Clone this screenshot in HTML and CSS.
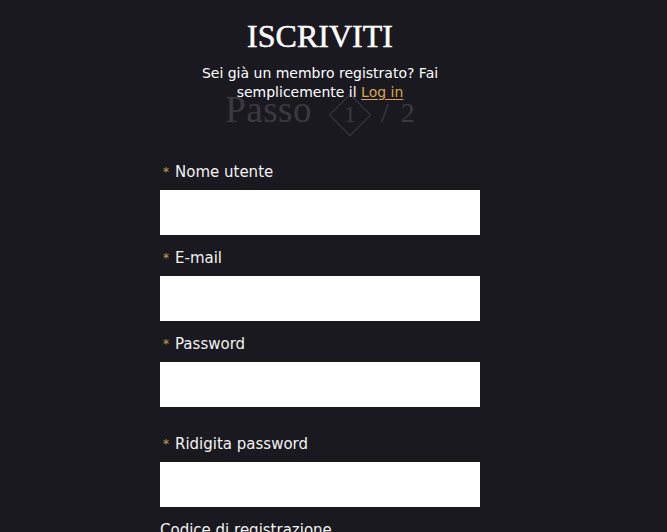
FILE: index.html
```html
<!DOCTYPE html>
<html lang="it">
<head>
<meta charset="utf-8">
<title>Iscriviti</title>
<link rel="stylesheet" href="styles.css">
</head>
<body>
<div class="page">
  <header class="head">
    <h1 class="title">ISCRIVITI</h1>
    <p class="subtitle">Sei già un membro registrato? Fai semplicemente il <a class="login" href="#">Log in</a></p>
    <div class="steps">
      <span class="steps-word">Passo</span>
      <span class="steps-current"><span class="steps-num">1</span></span>
      <span class="steps-total">/ 2</span>
    </div>
  </header>
  <form class="form">
    <div class="group">
      <label class="label"><span class="req">*</span>Nome utente</label>
      <input class="field" type="text">
    </div>
    <div class="group">
      <label class="label"><span class="req">*</span>E-mail</label>
      <input class="field" type="email">
    </div>
    <div class="group">
      <label class="label"><span class="req">*</span>Password</label>
      <input class="field" type="password">
      <div class="hint"></div>
    </div>
    <div class="group">
      <label class="label"><span class="req">*</span>Ridigita password</label>
      <input class="field" type="password">
    </div>
    <div class="group">
      <label class="label">Codice di registrazione</label>
      <input class="field" type="text">
    </div>
  </form>
</div>
</body>
</html>
```
FILE: styles.css
```css
html, body {
  margin: 0;
  padding: 0;
  background: #1a191f;
}
body {
  font-family: "DejaVu Sans", "Liberation Sans", sans-serif;
  color: #f2f2f2;
}
.page {
  width: 640px;
}
.head {
  display: flex;
  flex-direction: column;
  align-items: center;
}
.title {
  margin: 16px 0 0;
  font-family: "Liberation Serif", "DejaVu Serif", serif;
  font-weight: normal;
  font-size: 32px;
  line-height: 40px;
  color: #ffffff;
  -webkit-text-stroke: 0.5px #ffffff;
}
.subtitle {
  position: relative;
  z-index: 1;
  margin: 8px 0 0;
  width: 250px;
  font-size: 14px;
  line-height: 19px;
  text-align: center;
  color: #ffffff;
}
.login {
  color: #d7a751;
  text-decoration: underline;
  text-underline-offset: 2px;
}
.steps {
  display: flex;
  align-items: baseline;
  margin-top: -13px;
  font-family: "Liberation Serif", "DejaVu Serif", serif;
  color: #3b3a40;
}
.steps-word {
  font-size: 37px;
  line-height: 42px;
  letter-spacing: 0.5px;
}
.steps-current {
  position: relative;
  display: flex;
  align-items: center;
  justify-content: center;
  width: 42px;
  height: 42px;
  margin-left: 17px;
  font-size: 23px;
  line-height: 22px;
}
.steps-current::before {
  content: "";
  position: absolute;
  left: 6px;
  top: 6px;
  width: 28px;
  height: 28px;
  border: 1px solid #3b3a40;
  transform: rotate(45deg);
}
.steps-num {
  position: relative;
}
.steps-total {
  margin-left: 10px;
  font-size: 28px;
  line-height: 42px;
  word-spacing: 5px;
}
.form {
  width: 320px;
  margin: 26px auto 0;
}
.group {
  margin-bottom: 13px;
}
.label {
  display: block;
  font-size: 15px;
  line-height: 20px;
  margin-bottom: 8px;
  color: #f2f2f2;
}
.req {
  display: inline-block;
  margin-left: 3px;
  margin-right: 6px;
  font-size: 12px;
  color: #c9a060;
  vertical-align: 1px;
}
.field {
  display: block;
  box-sizing: border-box;
  width: 320px;
  height: 45px;
  margin: 0;
  border: 0;
  padding: 0 12px;
  background: #ffffff;
}
.hint {
  height: 14px;
}
```
